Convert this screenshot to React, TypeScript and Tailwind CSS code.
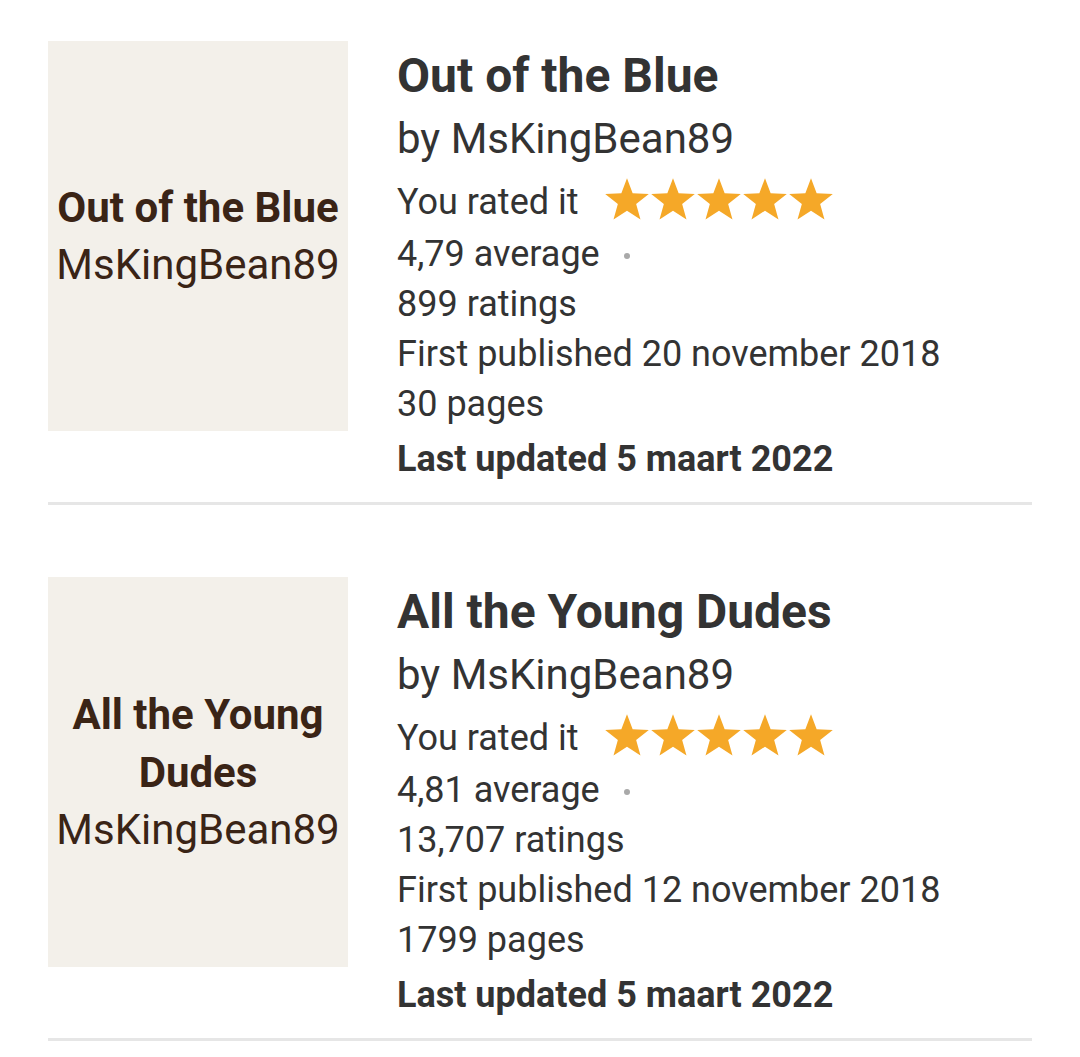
import React from 'react';

interface Book {
  title: string;
  author: string;
  average: string;
  ratings: string;
  published: string;
  pages: string;
  updated: string;
}

const books: Book[] = [
  {
    title: 'Out of the Blue',
    author: 'MsKingBean89',
    average: '4,79',
    ratings: '899',
    published: '20 november 2018',
    pages: '30',
    updated: '5 maart 2022',
  },
  {
    title: 'All the Young Dudes',
    author: 'MsKingBean89',
    average: '4,81',
    ratings: '13,707',
    published: '12 november 2018',
    pages: '1799',
    updated: '5 maart 2022',
  },
];

const Star = () => (
  <svg viewBox="2 0 96 91" className="w-[44px] h-[42px]">
    <polygon
      fill="#f5a828"
      points="50,0 62.34,33.01 97.55,34.55 69.97,56.49 79.39,90.45 50,71 20.61,90.45 30.03,56.49 2.45,34.55 37.66,33.01"
    />
  </svg>
);

const BookRow: React.FC<{ book: Book; first: boolean }> = ({ book, first }) => (
  <div className={first ? '' : 'mt-[72px]'}>
    <div className="flex gap-[49px] pb-[18px] border-b-[3px] border-[#e6e6e6]">
      {/* placeholder cover */}
      <div className="w-[300px] h-[390px] shrink-0 bg-[#f3f0ea] flex flex-col items-center justify-center text-center text-[#3a2416] px-2">
        <div className="text-[42px] leading-[58px] font-bold">{book.title}</div>
        <div className="text-[42px] leading-[56px]">{book.author}</div>
      </div>

      <div className="flex flex-col pt-[7px] text-[#333333]">
        <div className="text-[48px] leading-[56px] font-bold">{book.title}</div>
        <div className="mt-[7px] text-[42px] leading-[56px]">by {book.author}</div>
        <div className="mt-[9px] flex items-center h-[53px] text-[36px]">
          <span className="leading-[53px]">You rated it</span>
          <span className="flex self-start mt-[2px] ml-[26px] gap-[2px]">
            <Star />
            <Star />
            <Star />
            <Star />
            <Star />
          </span>
        </div>
        <div className="text-[36px] leading-[50px]">
          {book.average} average
          <span className="inline-block w-[6px] h-[6px] ml-[24px] rounded-full bg-[#a9a9a9] align-middle" />
        </div>
        <div className="text-[36px] leading-[50px]">{book.ratings} ratings</div>
        <div className="text-[36px] leading-[50px]">First published {book.published}</div>
        <div className="text-[36px] leading-[50px]">{book.pages} pages</div>
        <div className="mt-[5px] text-[36px] leading-[50px] font-bold">Last updated {book.updated}</div>
      </div>
    </div>
  </div>
);

export default function App() {
  return (
    <div className="min-h-screen bg-white px-[48px] pt-[41px]" style={{ fontFamily: 'Roboto, "Noto Sans", sans-serif' }}>
      <div className="w-[984px]">
        {books.map((b, i) => (
          <BookRow key={b.title} book={b} first={i === 0} />
        ))}
      </div>
    </div>
  );
}
